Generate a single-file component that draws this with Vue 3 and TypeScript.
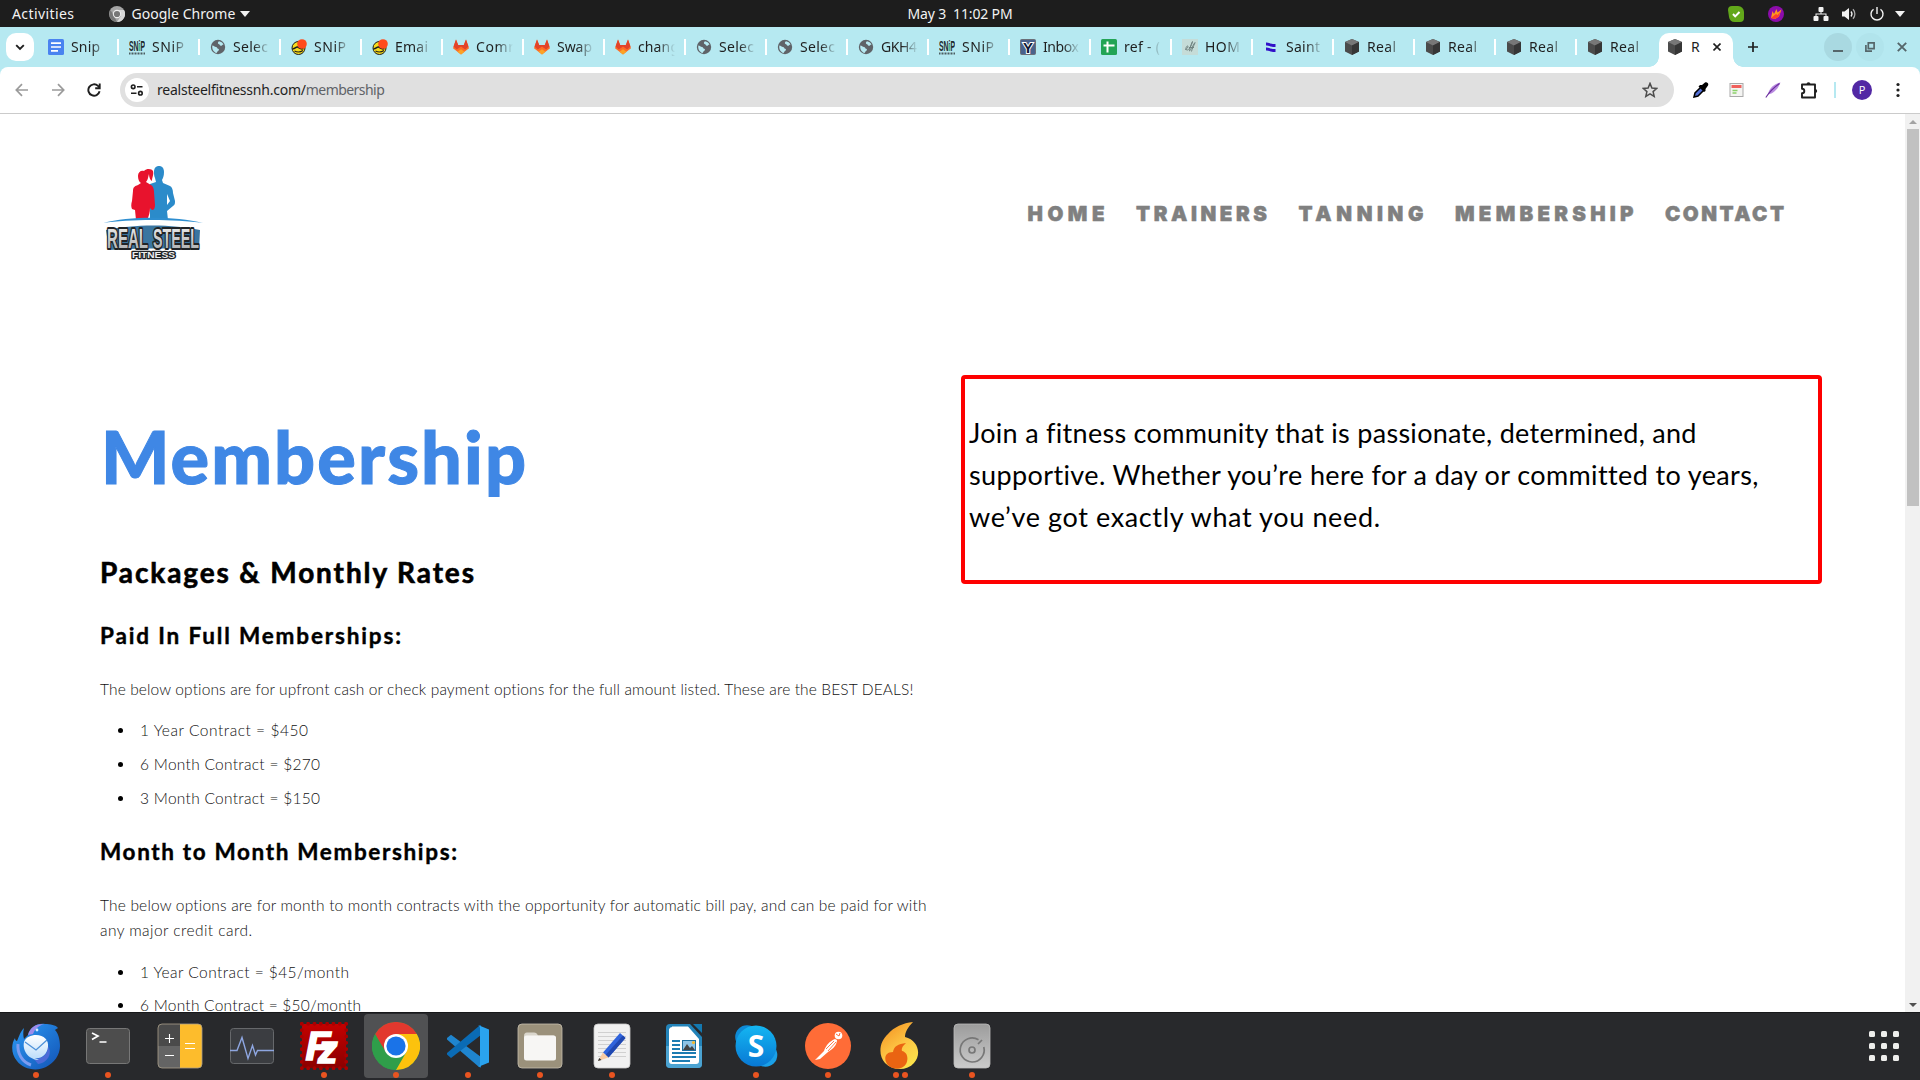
<script setup lang="ts">
type Tab = { icon: string; label: string; w: number }

/* Spreads an element's letters so that the text takes up the given width. */
const vFit = {
  mounted(el: HTMLElement, binding: { value: number }) {
    const count = (el.textContent ?? '').length
    if (count < 2) return
    const natural = el.getBoundingClientRect().width
    el.style.letterSpacing = `${((binding.value - natural) / (count - 1)).toFixed(3)}px`
  },
}

const globe = '<circle cx="8" cy="8" r="7.200" fill="#5f6368"/><path d="M2.300 6.500c1.700 0 2.200 1.500 3.700 1.500 1.200.2 1 1.500 2.200 1.700 1.300.3.800 2-.2 2.300-1 .4-.6 1.500-1.500 2C3.800 13.300 1.800 10.500 2.300 6.500z" fill="#b6e9f1"/><path d="M9 2.200c2 .3 3.600 1.500 4.500 3.300-1.500.2-1.500 1.500-2.700 1.300C9.500 6.500 10 5.500 9 5.200c-1.500-.4-1.500-2 0-3z" fill="#b6e9f1"/>'
const hat = '<circle cx="7.500" cy="9" r="6.500" fill="#f7dc1c" stroke="#1d1d1d" stroke-width="1"/><path d="M1.500 9.500c2 1 3.200-2 5-1.500s3 3 6 1.500" fill="none" stroke="#1d1d1d" stroke-width="1.500"/><path d="M3.500 12c3 1.500 6 1.200 8.500-.5" fill="none" stroke="#1d1d1d" stroke-width="1.200"/><circle cx="11" cy="5" r="4.800" fill="#ff4a1c"/>'
const gitlab = '<path d="M8 15.500L0 9.200 3 .5l2.200 5.500h5.600L13 .5l3 8.700z" fill="#fc6d26"/><path d="M.5 7.500L3 .5l2.200 5.500h5.600L13 .5l2.500 7-3.300 3L8 7.500l-4.200 3z" fill="#e24329"/><path d="M8 15.500l-3.500-2.800L8 10.200l3.500 2.500z" fill="#fca326"/>'
const snip = '<text x="0" y="12" font-family="Liberation Sans Narrow, Liberation Sans, sans-serif" font-weight="700" font-size="14.500" textLength="16" lengthAdjust="spacingAndGlyphs" fill="#1d2b2e">SNiP</text><path d="M10.500 5v7" stroke="#4fb89c" stroke-width="1.200"/><path d="M0 14.500h16" stroke="#4b5d60" stroke-width="2" stroke-dasharray="1 .5"/>'
const cube = '<path d="M8 0l7 3v9.500L8 16l-7-3.500V3z" fill="#4b4b4b"/><path d="M8 0l7 3-7 3.500L1 3z" fill="#777"/><path d="M8 6.500L15 3v9.500L8 16z" fill="#363636"/>'

const favicons: Record<string, string> = {
  globe, hat, gitlab, snip, cube,
  docs: '<rect x="0" y="0" width="16" height="16" rx="1.500" fill="#4a83f0"/><path d="M3 4.200h10M3 8h10M3 11.800h7" stroke="#fff" stroke-width="1.700"/>',
  yahoo: '<rect x=".5" y=".5" width="15" height="15" rx="1" fill="#4a628c" stroke="#6b6f78"/><text x="8" y="13.500" text-anchor="middle" font-family="Liberation Sans, sans-serif" font-weight="700" font-size="15" fill="#0f1735" stroke="#fff" stroke-width="2" paint-order="stroke">Y</text>',
  sheets: '<rect width="16" height="16" rx="1.500" fill="#23a455"/><path d="M2.500 6.500h11M6.500 2.500v11" stroke="#fff" stroke-width="2"/>',
  script: '<rect width="16" height="16" fill="#c5dcd8"/><path d="M3 10.500c2.500-.5 4-3.500 2.500-3.500S3 11.500 5.500 11s5.500-8.500 5-8.500-3.500 9-3 9.500 5-8.500 5.500-8.500-3 6-3.500 9M7 8.500h5" fill="none" stroke="#6b7d7a" stroke-width=".9"/>',
  flag: '<path d="M3 3.500c3-.5 4 2 9.500 1.500v3C8 8.500 6 6 3 6.500zM3 8.500c3-.5 4 2 9.500 1.500v3C8 13.500 6 11 3 11.500z" fill="#3210c8"/>',
}

const tabs: Tab[] = [
  { icon: 'docs', label: 'Snip', w: 29 },
  { icon: 'snip', label: 'SNiP', w: 32 },
  { icon: 'globe', label: 'Selec', w: 35 },
  { icon: 'hat', label: 'SNiP', w: 32 },
  { icon: 'hat', label: 'Emai', w: 33 },
  { icon: 'gitlab', label: 'Comr', w: 38 },
  { icon: 'gitlab', label: 'Swap', w: 35 },
  { icon: 'gitlab', label: 'chang', w: 41 },
  { icon: 'globe', label: 'Selec', w: 35 },
  { icon: 'globe', label: 'Selec', w: 35 },
  { icon: 'globe', label: 'GKH4', w: 36 },
  { icon: 'snip', label: 'SNiP', w: 32 },
  { icon: 'yahoo', label: 'Inbox', w: 36 },
  { icon: 'sheets', label: 'ref - (', w: 36 },
  { icon: 'script', label: 'HOM', w: 35 },
  { icon: 'flag', label: 'Saint', w: 34 },
  { icon: 'cube', label: 'Real', w: 29 },
  { icon: 'cube', label: 'Real', w: 29 },
  { icon: 'cube', label: 'Real', w: 29 },
  { icon: 'cube', label: 'Real', w: 29 },
]

const nav = [
  { label: 'HOME', w: 77 },
  { label: 'TRAINERS', w: 131 },
  { label: 'TANNING', w: 125 },
  { label: 'MEMBERSHIP', w: 178.5 },
  { label: 'CONTACT', w: 119 },
]

const fullPlans = [
  { label: '1 Year Contract = $450', w: 168 },
  { label: '6 Month Contract = $270', w: 180 },
  { label: '3 Month Contract = $150', w: 180 },
]
const monthlyPlans = [
  { label: '1 Year Contract = $45/month', w: 209 },
  { label: '6 Month Contract = $50/month', w: 221 },
]
const intro = [
  { text: 'Join a fitness community that is passionate, determined, and', w: 727 },
  { text: 'supportive. Whether you’re here for a day or committed to years,', w: 789 },
  { text: 'we’ve got exactly what you need.', w: 411 },
]

type App = { name: string; dots: number; active?: boolean; art: string }
const apps: App[] = [
  { name: 'mail', dots: 1, art: '<defs><linearGradient id="tb" x1="0" y1="0" x2="1" y2="1"><stop offset="0" stop-color="#2c9bf5"/><stop offset="1" stop-color="#1253b5"/></linearGradient><linearGradient id="tw" x1="0" y1="0" x2="0" y2="1"><stop offset="0" stop-color="#fff"/><stop offset="1" stop-color="#b9dcfa"/></linearGradient></defs><path d="M12 6C8 10 7 15 5 19c-1 0-2-1-2-3C-1 22-1 32 5 39c6 8 19 11 29 6 8-4 14-12 14-21 0-7-2-13-5-16 1-1 3-2 3-2-2-3-8-4-13-4-9-1-15 4-17 11l-4 4c-1-4-1-7 0-11z" fill="url(#tb)"/><path d="M16 13c2-8 8-11 16-11-6 2-9 5-11 10z" fill="#9d8bea"/><path d="M6 22c-1 9 4 18 13 21" fill="none" stroke="#7d9cf0" stroke-width="3"/><path d="M22 37c9 0 14-5 14-13 5 8-1 17-10 18z" fill="#4d6bd8"/><path d="M12 20c2-5 7-7 12-7 8 0 13 5 12 12-1 8-7 12-13 11l4 2c-9 0-17-8-15-18z" fill="url(#tw)"/><path d="M13 20l11 8 11-10" fill="none" stroke="#4d91d8" stroke-width="1.300"/><circle cx="25" cy="8" r="1.400" fill="#d7ecff"/>' },
  { name: 'terminal', dots: 1, art: '<rect x="2.500" y="6.500" width="43" height="35" rx="3" fill="#4d4d4d" stroke="#777"/><path d="M8 11l6 3-6 3.500M15.500 20h7" fill="none" stroke="#fff" stroke-width="1.700"/>' },
  { name: 'calculator', dots: 0, art: '<path d="M6 2h18v22H2V6a4 4 0 0 1 4-4z" fill="#4a4a4a"/><path d="M2 24h22v22H6a4 4 0 0 1-4-4z" fill="#646464"/><path d="M24 2h18a4 4 0 0 1 4 4v36a4 4 0 0 1-4 4H24z" fill="#fdbc2c"/><rect x="2" y="2" width="44" height="44" rx="4" fill="none" stroke="#aaa08a" stroke-width=".8"/><path d="M9 16.500h9M13.500 12v9M9 33.500h9M29 21.500h10M29 26.500h10" stroke="#fff" stroke-width="1.100"/>' },
  { name: 'monitor', dots: 0, art: '<rect x="2.500" y="6.500" width="43" height="35" rx="3" fill="#3b3d41" stroke="#66686b"/><path d="M2 28.500h7l5-13 6 21 4.500-13 3 9.500 2-4.500H46" fill="none" stroke="#8ea6e0" stroke-width="1.400"/>' },
  { name: 'filezilla', dots: 1, art: '<defs><linearGradient id="fz" x1="0" y1="0" x2="0" y2="1"><stop stop-color="#c40000"/><stop offset="1" stop-color="#8b0000"/></linearGradient></defs><rect x="2" y="2" width="44" height="44" fill="url(#fz)"/><rect x="1.800" y="1.800" width="44.400" height="44.400" fill="none" stroke="#a90000" stroke-width="3.800" stroke-dasharray="0 6.340" stroke-linecap="round"/><g font-family="Liberation Sans, sans-serif" font-weight="700" font-style="italic" fill="#fff" stroke="#fff" stroke-width="1.600"><text x="5.500" y="37.500" font-size="41">F</text><text x="18" y="40.500" font-size="39">z</text></g>' },
  { name: 'chrome', dots: 1, active: true, art: '<circle cx="24" cy="24" r="24" fill="#2f9e4a"/><path d="M24 24H3.200L3.200 12A24 24 0 0 1 44.800 12z" fill="#e2382e"/><path d="M24 12h20.800A24 24 0 0 1 24 48L34.400 30z" fill="#fcc20d"/><path d="M3.200 12L13.600 30 24 12z" fill="#e2382e"/><path d="M3.200 12L13.600 30 24 36v12A24 24 0 0 1 3.200 12z" fill="#2f9e4a"/><circle cx="24" cy="24" r="12" fill="#fff"/><circle cx="24" cy="24" r="9.600" fill="#1a73e8"/>' },
  { name: 'code', dots: 1, art: '<path d="M3 16l4-3.200L37 35v10.500L35 45 3 17.500z" fill="#1f85cf"/><path d="M3 32.500L7 36 37 13V3l-2 1L3 31z" fill="#0a6bb5"/><path d="M34 3l11 4.500v33L34 45c1.500-1 2-2 2-3.500v-35C36 5 35.500 4 34 3z" fill="#2aa3ef"/>' },
  { name: 'files', dots: 1, art: '<rect x="2" y="2" width="44" height="44" rx="4" fill="#9b917b" stroke="#c7bfae" stroke-width=".8"/><path d="M8 14c0-2 1-3.500 3-3.500h7c2 0 3 1 4 3h15c2 0 3 1 3 3V35H8z" fill="#dad6cc"/><rect x="8" y="13.500" width="32" height="25" rx="2.500" fill="#f7f6f4"/>' },
  { name: 'editor', dots: 1, art: '<rect x="6" y="2" width="36" height="44" rx="4" fill="#f1f1f1" stroke="#ccc" stroke-width=".8"/><path d="M10 10.500h28M10 14.500h28M10 18.500h28M10 22.500h28M10 26.500h28M10 30.500h28M10 34.500h28" stroke="#d0d0d0"/><path d="M15 30.500L32 11l5.500 5L20.500 35.500z" fill="#2f63dc"/><path d="M17.500 33L35 13.500l2.500 2.500-17 19.500z" fill="#2048b0"/><path d="M15 30.500l5.500 5L10 39z" fill="#f8cba3"/><path d="M11.200 36l2.300 2L10 39z" fill="#333"/>' },
  { name: 'writer', dots: 0, art: '<path d="M10 2h20l12 13v27a4 4 0 0 1-4 4H10a4 4 0 0 1-4-4V6a4 4 0 0 1 4-4z" fill="#2383b9"/><path d="M6 24h36v18a4 4 0 0 1-4 4H10a4 4 0 0 1-4-4z" fill="#4ba3d2"/><path d="M12 4.500h16L39 17v22a3 3 0 0 1-3 3H12a3 3 0 0 1-3-3V7.500a3 3 0 0 1 3-2.500z" fill="#fff"/><path d="M33 2h9v9z" fill="#1378b0"/><path d="M12 19h8M12 23h8M12 27h8M12 31h24M12 35h24M12 39h18" stroke="#1c7cb2" stroke-width="1.800"/><rect x="22.500" y="18.500" width="13" height="10" fill="#8fc4e6" stroke="#1c6fa0"/><path d="M23 28l4-6 3 4 2-2 3 4z" fill="#444"/><circle cx="33.500" cy="20.500" r="1.600" fill="#f6b92a"/>' },
  { name: 'skype', dots: 1, art: '<defs><linearGradient id="sk" x1="0" y1="0" x2="0" y2="1"><stop stop-color="#14b6f2"/><stop offset="1" stop-color="#0878d4"/></linearGradient></defs><circle cx="15" cy="15" r="11.800" fill="#0e8ad6"/><circle cx="33.500" cy="33" r="11.800" fill="#1aa0e8"/><circle cx="24" cy="24" r="20.500" fill="url(#sk)"/><text x="24" y="34.500" text-anchor="middle" font-family="Open Sans" font-weight="700" font-size="30" fill="#fff">S</text>' },
  { name: 'postman', dots: 1, art: '<circle cx="24" cy="24" r="23" fill="#ff6c37"/><circle cx="34.500" cy="13.500" r="3.800" fill="#fff"/><path d="M31 17c-5 2-9 6-11 12l-9 9 5-1 8-7c5-3 9-7 9-12z" fill="#fff"/><path d="M22 27l8-8M24 29l8-9" stroke="#ff6c37" stroke-width=".9"/><path d="M32 12l3 2 1-3" fill="none" stroke="#ff6c37"/>' },
  { name: 'flame', dots: 2, art: '<defs><linearGradient id="fl" x1="0" y1="0" x2=".6" y2="1"><stop stop-color="#f28b1e"/><stop offset=".6" stop-color="#fdc544"/><stop offset="1" stop-color="#fbe04a"/></linearGradient></defs><path d="M37 0C27 1 18 5 12 12 3 20 2 33 9 41c8 8 22 8 29 0 8-9 4-23-9-26 0-5 3-10 8-15z" fill="url(#fl)"/><path d="M30 21c-8 1-12 3-13 9-7 0-9 5-7 10 3 8 16 9 20 2 3-6 1-12-4-13-1-3 1-5 4-8z" fill="#ea6412"/>' },
  { name: 'disk', dots: 1, art: '<defs><linearGradient id="dk" x1="0" y1="0" x2="0" y2="1"><stop stop-color="#9c9c9c"/><stop offset="1" stop-color="#cbcbcb"/></linearGradient></defs><rect x="6" y="2" width="36" height="44" rx="4" fill="url(#dk)" stroke="#bdbdbd" stroke-width=".8"/><path d="M30.500 17.800A12 12 0 1 0 35.800 25" fill="none" stroke="#777" stroke-width="1.700"/><path d="M30 22l4-4" stroke="#777" stroke-width="1.700"/><circle cx="24" cy="28" r="3" fill="none" stroke="#777" stroke-width="1.700"/>' },
]
</script>

<template>
  <div class="screen">
    <header class="topbar">
      <div class="tb-left">
        <span v-fit="62" class="t">Activities</span>
        <svg class="tb-chrome" width="16" height="16" viewBox="0 0 16 16">
          <circle cx="8" cy="8" r="8" fill="#a5a5a5" /><path d="M8 4h7a8 8 0 0 1-7 12l4-6z" fill="#d8d8d8" />
          <path d="M1.500 4L5 10l3 6A8 8 0 0 1 1.500 4z" fill="#777" />
          <circle cx="8" cy="8" r="4.200" fill="#eee" /><circle cx="8" cy="8" r="3.100" fill="#777" />
        </svg>
        <span v-fit="104" class="t">Google Chrome</span>
        <i class="caret"></i>
      </div>
      <div class="clock"><span v-fit="105" class="t">May 3&nbsp; 11:02 PM</span></div>
      <div class="tray">
        <svg width="16" height="16" viewBox="0 0 16 16"><path d="M4 0h6a6 6 0 0 1 6 6v6a4 4 0 0 1-4 4H7a6 6 0 0 1-6-5L0 4a4 4 0 0 1 4-4z" fill="#62a81a" /><path d="M5 8l2.200 2.400L11.500 6" fill="none" stroke="#fff" stroke-width="2" /></svg>
        <svg class="g1" width="16" height="16" viewBox="0 0 16 16"><circle cx="8" cy="8" r="8" fill="#8d0cab" /><path d="M3 12L4.500 5 6 8 8.500 3 9.500 6.500 13.500 3.500 11 10.500 7 13z" fill="#ff9a1c" /><path d="M3 12l3-2.500L8 8l1.500 1 3-3.500-2 5.500-4 2z" fill="#ff3d2e" /></svg>
        <svg class="g2" width="16" height="16" viewBox="0 0 16 16" fill="#f2f2f2"><rect x="5.500" y="1" width="5" height="5" rx="1" /><rect x=".5" y="10" width="5" height="5" rx="1" /><rect x="10.500" y="10" width="5" height="5" rx="1" /><path d="M7.500 6h1v1.500h5V10h-1V8.500h-9V10h-1V7.500h5z" /></svg>
        <svg class="g3" width="16" height="16" viewBox="0 0 16 16"><path d="M1 5.500h2.500L8 2v12l-4.500-3.500H1z" fill="#f2f2f2" /><path d="M10 5.500c1.200 1.500 1.200 3.500 0 5" fill="none" stroke="#f2f2f2" stroke-width="1.300" /><path d="M12 3.300c2.500 2.700 2.500 6.700 0 9.400" fill="none" stroke="#aaa" stroke-width="1.300" /></svg>
        <svg class="g3" width="16" height="16" viewBox="0 0 16 16"><path d="M4.500 3.200a6 6 0 1 0 7 0M8 1v7" fill="none" stroke="#f2f2f2" stroke-width="1.400" /></svg>
        <i class="caret"></i>
      </div>
    </header>

    <div class="tabstrip">
      <button class="tabsearch"><svg width="10" height="7" viewBox="0 0 10 7"><path d="M1.200 1.200L5 5l3.800-3.800" fill="none" stroke="#1f1f1f" stroke-width="1.900" /></svg></button>
      <div v-for="(tab, i) in tabs" :key="i" class="tab" :class="{ last: i === tabs.length - 1 }">
        <svg width="16" height="16" viewBox="0 0 16 16" v-html="favicons[tab.icon]"></svg>
        <span class="tab-label"><span v-fit="tab.w" class="t">{{ tab.label }}</span></span>
      </div>
      <div class="tab-active">
        <svg width="16" height="16" viewBox="0 0 16 16" v-html="cube"></svg>
        <span class="t">R</span>
        <svg class="x" width="8" height="8" viewBox="0 0 8 8"><path d="M.5.5l7 7m0-7l-7 7" stroke="#1f1f1f" stroke-width="1.600" /></svg>
      </div>
      <svg class="plus" width="10" height="10" viewBox="0 0 10 10"><path d="M5 0v10M0 5h10" stroke="#1f1f1f" stroke-width="1.700" /></svg>
      <div class="winbtns">
        <i class="wb dark"><svg width="12" height="12" viewBox="0 0 12 12"><path d="M1 10h10" stroke="#55666a" stroke-width="2" /></svg></i>
        <i class="wb mid"><svg width="10" height="10" viewBox="0 0 10 10" fill="none" stroke="#55666a" stroke-width="1.700"><path d="M3.300.9h5.800v5.800H3.300zM.9 3v6.100H7" /></svg></i>
        <i class="wb"><svg width="10" height="10" viewBox="0 0 10 10"><path d="M.8.8l8.400 8.400m0-8.400L.8 9.200" stroke="#55666a" stroke-width="1.900" /></svg></i>
      </div>
    </div>

    <div class="toolbar-wrap">
      <div class="toolbar">
        <svg class="arrow" width="14" height="14" viewBox="0 0 14 14" fill="none" stroke="#9a9a9a" stroke-width="1.700"><path d="M13 7H1.500M7 1.200L1.300 7 7 12.800" /></svg>
        <svg class="arrow" width="14" height="14" viewBox="0 0 14 14" fill="none" stroke="#9a9a9a" stroke-width="1.700"><path d="M1 7h11.500M7 1.200L12.700 7 7 12.800" /></svg>
        <svg class="arrow" width="14" height="14" viewBox="0 0 14 14" fill="none" stroke="#1f1f1f" stroke-width="1.900"><path d="M12.600 8.300A5.700 5.700 0 1 1 11 2.900l1.600 1.700" /><path d="M12.700.6v4.600H8.200" /></svg>
        <div class="omnibox">
          <span class="site"><svg width="14" height="12" viewBox="0 0 14 12" fill="none" stroke="#1f1f1f" stroke-width="1.600"><circle cx="3.200" cy="2.800" r="1.800" /><path d="M7 2.800h5.500M1 9.200h5.500" /><circle cx="10.400" cy="9.200" r="1.800" /></svg></span>
          <span class="url"><span v-fit="149" class="t">realsteelfitnessnh.com/</span><span v-fit="79" class="t path">membership</span></span>
          <svg class="star" width="16" height="16" viewBox="0 0 16 16"><path d="M8 1.400l1.900 4.600 4.900.4-3.700 3.200 1.100 4.800L8 11.900l-4.200 2.500 1.100-4.800L1.200 6.400 6.100 6z" fill="none" stroke="#4d4d4d" stroke-width="1.500" /></svg>
        </div>
        <div class="exts">
          <svg width="16" height="16" viewBox="0 0 16 16"><path d="M1 15l1-4 6-6 3 3-6 6z" fill="#5470d8" stroke="#000" stroke-width="1.500" /><path d="M7 3l2 0 3-2.500c2-1 4 1 3 3L12.500 7v2L11 10 5.500 4.500z" fill="#000" /></svg>
          <svg width="16" height="16" viewBox="0 0 16 16"><rect x="1" y="1.500" width="13" height="13" fill="#f4f4f2" stroke="#a9a9a9" /><rect x="2.500" y="3" width="10" height="3" fill="#f0605c" /><path d="M3.500 8.500h5M3.500 11h4" stroke="#8bd06a" stroke-width="1.300" /></svg>
          <svg width="16" height="16" viewBox="0 0 16 16"><path d="M15.500.5C9 2 4 6.500 3 12.500 8 11.500 12.500 8 15.500.5z" fill="#b98be0" /><path d="M.8 15.500C4 10.500 8 6 14.500 1.500" fill="none" stroke="#6b2f9e" stroke-width="1.100" /></svg>
          <svg width="18" height="18" viewBox="0 0 18 18"><path d="M2 3.500h13v13H2V12.300a2.200 2.200 0 0 0 0-4.600z" fill="none" stroke="#1f1f1f" stroke-width="1.900" stroke-linejoin="round" /><path d="M6.500 3.500a2 2.200 0 0 1 4 0zM15 8a2.200 2 0 0 1 0 4z" fill="#1f1f1f" /></svg>
          <i class="divider"></i>
          <span class="avatar">P</span>
          <svg class="menu" width="4" height="16" viewBox="0 0 4 16" fill="#1f1f1f"><circle cx="2" cy="2.500" r="1.600" /><circle cx="2" cy="8" r="1.600" /><circle cx="2" cy="13.500" r="1.600" /></svg>
        </div>
      </div>
    </div>

    <div class="viewport">
      <main class="site-page">
        <div class="site-head">
          <svg class="logo" width="104" height="100" viewBox="0 0 104 100">
            <defs>
              <linearGradient id="steel" x1="0" y1="0" x2="0" y2="1"><stop offset="0" stop-color="#f2f2f2" /><stop offset="1" stop-color="#a4a6a8" /></linearGradient>
            </defs>
            <path d="M53 6c0-4 2-6 5-6s5 2 5 6-1 6-2 8l1 3 7 3c2 1 3 4 3 7l2 8c0 2 0 4-2 5l-6 5 1 9H49V18l6-2-1-4c-1-2-1-4-1-6z" fill="#2b8bca" />
            <path d="M66 28l3 7-3 4z" fill="#fff" />
            <path d="M37 10c0-4 3-6 6-5 3-3 8-2 9 0 1 4-1 6-1 10-2-1-3-4-3-7-1 3-1 6-3 8l5 3c2 1 3 4 3 7l1 13c0 3-1 5-3 5l-2-2c0 4-1 8-3 12H35l-1-10-3-1c-1-2-1-5 0-8l1-10c0-4 2-5 5-6l3-2c-2-1-3-4-3-7z" fill="#e8132d" />
            <path d="M2 57C28 50 74 50 102 57 74 53 28 53 2 57z" fill="#2e8ed0" />
            <path d="M5 64c28-6 66-6 94 0l-1 20c-24-2-66-2-90 0z" fill="#3a75a0" />
            <g font-family="Liberation Sans Narrow, Liberation Sans, sans-serif" font-weight="700" stroke-linejoin="round" paint-order="stroke">
              <text x="6" y="82" font-size="28" textLength="41" lengthAdjust="spacingAndGlyphs" fill="url(#steel)" stroke="#202326" stroke-width="4">REAL</text>
              <text x="52" y="82" font-size="28" textLength="46" lengthAdjust="spacingAndGlyphs" fill="url(#steel)" stroke="#202326" stroke-width="4">STEEL</text>
              <text x="31" y="92" font-size="9" textLength="43" lengthAdjust="spacingAndGlyphs" fill="#eee" stroke="#202326" stroke-width="2.500">FITNESS</text>
            </g>
          </svg>
          <nav>
            <a v-for="item in nav" :key="item.label" :style="{ width: item.w + 'px' }"><span v-fit="item.w">{{ item.label }}</span></a>
          </nav>
        </div>
        <div class="columns">
          <section class="left">
            <h1><span v-fit="425">Membership</span></h1>
            <h2><span v-fit="374">Packages &amp; Monthly Rates</span></h2>
            <h3><span v-fit="301">Paid In Full Memberships:</span></h3>
            <p><span v-fit="814">The below options are for upfront cash or check payment options for the full amount listed. These are the BEST DEALS!</span></p>
            <ul><li v-for="plan in fullPlans" :key="plan.label"><span v-fit="plan.w">{{ plan.label }}</span></li></ul>
            <h3 class="second"><span v-fit="357">Month to Month Memberships:</span></h3>
            <p class="second">
              <span v-fit="827">The below options are for month to month contracts with the opportunity for automatic bill pay, and can be paid for with</span><br>
              <span v-fit="152">any major credit card.</span>
            </p>
            <ul class="second"><li v-for="plan in monthlyPlans" :key="plan.label"><span v-fit="plan.w">{{ plan.label }}</span></li></ul>
          </section>
          <section class="callout">
            <div v-for="line in intro" :key="line.text"><span v-fit="line.w">{{ line.text }}</span></div>
          </section>
        </div>
      </main>
      <div class="scrollbar"><i class="up"></i><i class="thumb"></i><i class="down"></i></div>
    </div>

    <footer class="dock">
      <div v-for="app in apps" :key="app.name" class="app" :class="{ active: app.active }">
        <svg width="48" height="48" viewBox="0 0 48 48" v-html="app.art"></svg>
        <div class="dots"><i v-for="n in app.dots" :key="n"></i></div>
      </div>
      <div class="grid"><i v-for="n in 9" :key="n"></i></div>
    </footer>
  </div>
</template>

<style>
body { margin: 0; overflow: hidden; }
</style>

<style scoped>
* { box-sizing: border-box; }
svg { display: block; flex: none; }
.screen { width: 1920px; height: 1080px; display: flex; flex-direction: column; overflow: hidden; background: #fff; font-family: Lato, "Open Sans", sans-serif; }
span { white-space: nowrap; }
.t { font-family: "Noto Sans", "Open Sans", sans-serif; display: inline-block; }

.topbar { height: 27px; flex: none; background: #1d1d1d; color: #f2f2f2; display: grid; grid-template-columns: 1fr auto 1fr; align-items: center; font-size: 14px; line-height: 26px; }
.tb-left { display: flex; align-items: center; padding-left: 12px; height: 26px; }
.tb-chrome { margin: 0 6px 0 35px; }
.caret { border: 5px solid transparent; border-top: 6px solid #f2f2f2; border-bottom: 0; margin-left: 5px; }
.tray { display: flex; align-items: center; justify-content: flex-end; padding-right: 15px; }
.tray .g1 { margin-left: 24px; }
.tray .g2 { margin-left: 29px; }
.tray .g3 { margin-left: 12px; }
.tray .caret { margin-left: 10px; }

.tabstrip { height: 40px; flex: none; background: #b6e9f1; display: flex; align-items: center; padding-left: 6px; color: #1f1f1f; font-size: 14px; }
.tabsearch { width: 28px; height: 28px; border: 0; padding: 0; border-radius: 10px; background: #fff; display: flex; align-items: center; justify-content: center; margin-right: 14px; flex: none; }
.tab { width: 81px; flex: none; display: flex; align-items: center; height: 16px; }
.tab::after { content: ""; width: 2px; height: 16px; background: #fff; margin-left: 9px; flex: none; }
.tab.last::after { background: none; }
.tab-label { width: 37px; margin-left: 7px; overflow: hidden; line-height: 20px; flex: none; -webkit-mask-image: linear-gradient(90deg, #000 55%, transparent); mask-image: linear-gradient(90deg, #000 55%, transparent); }
.tab-active { position: relative; width: 74px; height: 34px; align-self: flex-end; margin-left: -9px; padding: 0 12px 6px 8px; border-radius: 10px 10px 0 0; background: #fff; display: flex; align-items: center; flex: none; }
.tab-active::before, .tab-active::after { content: ""; position: absolute; bottom: 0; width: 10px; height: 10px; }
.tab-active::before { left: -10px; background: radial-gradient(circle at 0 0, transparent 9.500px, #fff 10px); }
.tab-active::after { right: -10px; background: radial-gradient(circle at 100% 0, transparent 9.500px, #fff 10px); }
.tab-active .t { margin-left: 8px; line-height: 20px; }
.tab-active .x { margin-left: auto; }
.plus { margin-left: 15px; }
.winbtns { display: flex; margin-left: auto; padding-right: 4px; gap: 4px; }
.wb { width: 28px; height: 28px; border-radius: 50%; display: flex; align-items: center; justify-content: center; }
.wb.dark { background: #a9d9e1; }
.wb.mid { background: #b1e4ec; }

.toolbar-wrap { height: 47px; flex: none; background: #b6e9f1; }
.toolbar { height: 47px; background: #fff; border-radius: 8px 8px 0 0; border-bottom: 1px solid #cbcbcb; display: flex; align-items: center; padding-left: 15px; }
.arrow { margin-right: 22px; }
.omnibox { width: 1554px; height: 34px; margin-left: -2px; border-radius: 17px; background: #e0e0e0; display: flex; align-items: center; padding: 0 16px 0 5px; flex: none; }
.arrow:nth-child(3) { margin-right: 21px; }
.site { width: 24px; height: 24px; border-radius: 50%; background: #fff; display: flex; align-items: center; justify-content: center; }
.url { margin-left: 8px; font-size: 14px; line-height: 20px; color: #1f1f1f; display: flex; }
.path { color: #5f6368; }
.star { margin-left: auto; }
.exts { display: flex; align-items: center; margin-left: 19px; gap: 20px; }
.exts svg:nth-child(4) { margin-left: -1px; }
.divider { width: 2px; height: 16px; background: #b6e9f1; margin-left: -4px; }
.avatar { width: 20px; height: 20px; margin-left: -4px; border-radius: 50%; background: #5228a4; color: #fff; font: 11px/20px "Open Sans", sans-serif; text-align: center; }
.menu { margin-left: 4px; }

.viewport { flex: 1; min-height: 0; display: flex; }
.site-page { flex: 1; min-width: 0; overflow: hidden; color: #000; }
.site-head { height: 200px; display: flex; justify-content: space-between; align-items: flex-start; padding: 52px 121px 0 101px; }
nav { display: flex; gap: 31.500px; margin-top: 35px; color: #808080; font-family: Inter, Lato, sans-serif; font-weight: 900; font-size: 20.500px; line-height: 26px; -webkit-text-stroke: .5px #808080; }
nav a { display: block; flex: none; }
nav span { display: inline-block; }
.columns { display: flex; align-items: flex-start; }
.left { width: 961px; padding: 100px 0 0 100px; flex: none; }
h1, h2, h3, p, ul { margin: 0; white-space: nowrap; }
h1 { padding-left: 1px; font-size: 72px; line-height: 84px; font-weight: 900; color: #3f87e5; -webkit-text-stroke: 1px #3f87e5; }
h2 { margin-top: 57px; font-size: 28px; line-height: 34px; font-weight: 700; -webkit-text-stroke: .6px #000; }
h3 { margin-top: 33px; font-size: 22.500px; line-height: 27px; font-weight: 700; -webkit-text-stroke: .4px #000; }
h3.second { margin-top: 23px; }
p { margin-top: 28px; font-size: 15.500px; line-height: 25px; font-weight: 300; color: #111; }
p.second { margin-top: 28px; }
ul { margin-top: 11px; padding: 0; list-style: none; font-size: 15.500px; line-height: 34px; font-weight: 300; color: #111; }
ul.second { margin-top: 12px; }
li { display: flex; align-items: center; height: 34px; padding-left: 18px; }
ul.second li + li { margin-top: -1px; }
li::before { content: ""; width: 5px; height: 5px; border-radius: 50%; background: #000; margin-right: 17px; }
.callout { width: 861px; height: 209px; margin-top: 61px; border: 4px solid #fe0000; border-radius: 4px; padding: 33px 0 0 4px; font-size: 27px; line-height: 42px; font-weight: 400; flex: none; white-space: nowrap; }
.scrollbar { width: 15px; flex: none; background: #f1f1f1; display: flex; flex-direction: column; align-items: center; padding: 6px 0 5px; }
.up { border: 4px solid transparent; border-bottom: 4px solid #a3a3a3; border-top: 0; }
.thumb { width: 12px; height: 377px; margin-top: 5px; background: #c1c1c1; }
.down { border: 4px solid transparent; border-top: 4px solid #505050; border-bottom: 0; margin-top: auto; }

.dock { height: 68px; flex: none; background: #28292c; border-top: 1px solid #17181a; display: flex; padding: 1px 21px 0 4px; gap: 8px; }
.app { width: 64px; height: 64px; padding-top: 8px; display: flex; flex-direction: column; align-items: center; border-radius: 4px; flex: none; }
.app.active { background: #505153; }
.dots { display: flex; gap: 3px; margin-top: 2px; }
.dots i { width: 6px; height: 6px; border-radius: 50%; background: #e95420; }
.grid { margin: 17px 0 0 auto; display: grid; grid-template-columns: repeat(3, 6px); grid-auto-rows: 6px; gap: 6px; }
.grid i { border-radius: 1.500px; background: #eeeeec; }
</style>
